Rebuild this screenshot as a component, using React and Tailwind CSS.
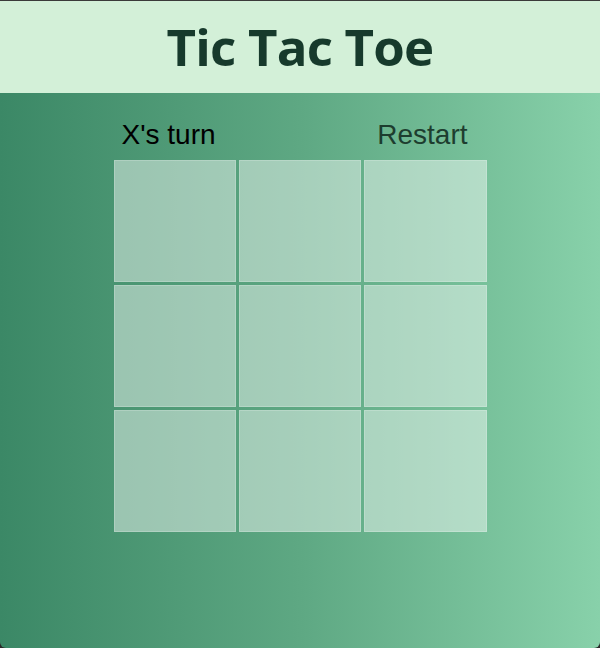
export default function App() {
  const cells = Array.from({ length: 9 });
  return (
    <div className="w-[600px] h-[648px] bg-[#2a2a2a] overflow-hidden">
      <div className="w-full h-full flex flex-col rounded-b-[6px] overflow-hidden border-t border-[#3a3a3a]">
        <header className="h-[92px] shrink-0 bg-[#d3f0d8] flex items-center justify-center">
          <h1
            className="text-[51px] font-bold text-[#173a2c] leading-none tracking-[-0.8px] pb-[2px]"
            style={{ fontFamily: '"Open Sans", "Noto Sans", sans-serif' }}
          >
            Tic Tac Toe
          </h1>
        </header>
        <main className="flex-1 bg-gradient-to-r from-[#3b8866] via-[#5ea883] to-[#88d1aa] flex flex-col items-center pt-[24px]">
          <div
            className="w-[373px] flex items-center justify-between pl-[8px] pr-[19px] h-[36px] text-[28px]"
            style={{ fontFamily: '"Liberation Sans", Arial, sans-serif' }}
          >
            <span className="text-black">X's turn</span>
            <button className="text-[#1d3d2f]">Restart</button>
          </div>
          <div className="mt-[7px] grid grid-cols-3 gap-[3px] w-[373px]">
            {cells.map((_, i) => (
              <button
                key={i}
                className="h-[122px] bg-white/45 border border-white/20"
              />
            ))}
          </div>
        </main>
      </div>
    </div>
  );
}
